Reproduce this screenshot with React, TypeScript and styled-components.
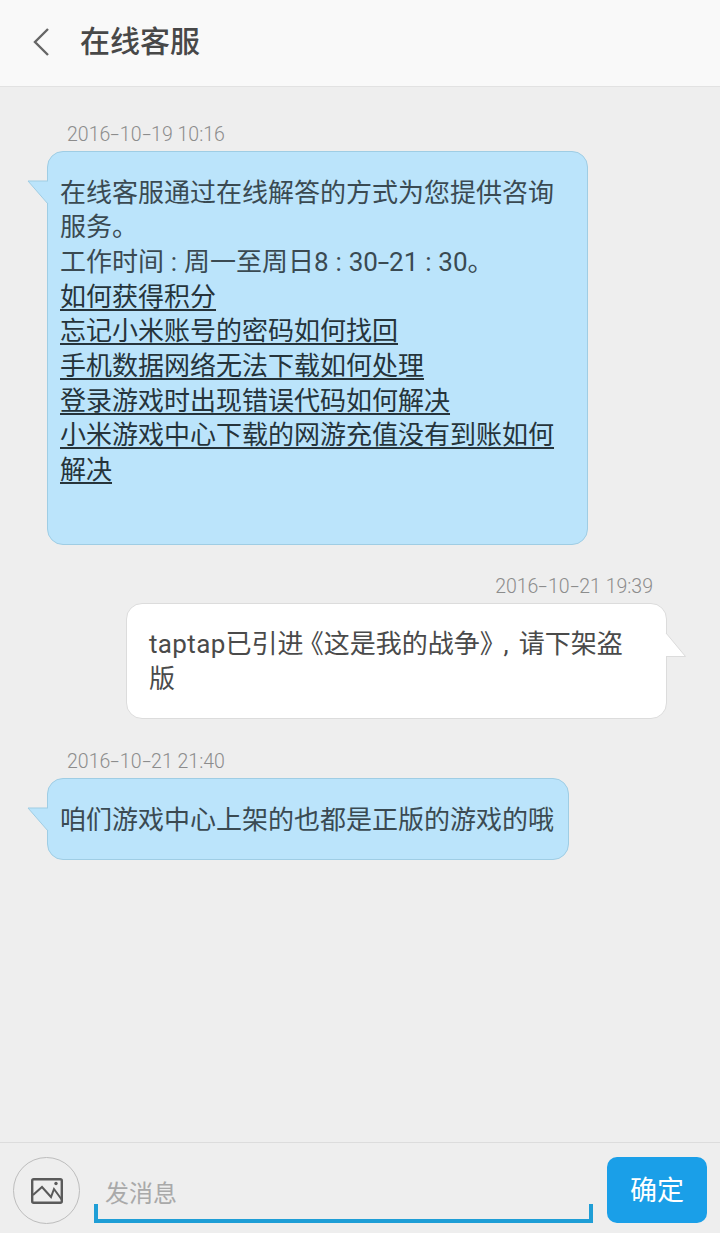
import React from "react";
import styled, { createGlobalStyle } from "styled-components";

const GlobalStyle = createGlobalStyle`
  html, body {
    margin: 0;
    padding: 0;
    background: #eeeeee;
  }
  * {
    box-sizing: border-box;
  }
`;

const Page = styled.div`
  width: 720px;
  height: 1233px;
  display: flex;
  flex-direction: column;
  background: #eeeeee;
  font-family: "Roboto", "Noto Sans CJK SC", sans-serif;
  overflow: hidden;
`;

const Header = styled.div`
  height: 87px;
  flex: none;
  display: flex;
  align-items: center;
  padding: 0 0 2px 32px;
  background: #f9f9f9;
  border-bottom: 1px solid #e2e2e2;
`;

const Title = styled.div`
  margin-left: 30px;
  font-size: 30px;
  font-weight: 500;
  color: #484848;
  line-height: 40px;
`;

const Messages = styled.div`
  flex: 1;
  display: flex;
  flex-direction: column;
  padding-top: 35px;
`;

const Message = styled.div<{ $mine?: boolean }>`
  display: flex;
  flex-direction: column;
  align-items: ${(p) => (p.$mine ? "flex-end" : "flex-start")};
  padding: ${(p) => (p.$mine ? "0 53px 0 0" : "0 0 0 47px")};
  margin-bottom: ${(p) => (p.$mine ? "30px" : "29px")};
`;

const Time = styled.div<{ $mine?: boolean }>`
  font-size: 19.5px;
  font-weight: 300;
  line-height: 26px;
  height: 29px;
  color: #8c8c8c;
  margin: ${(p) => (p.$mine ? "0 14px 0 0" : "0 0 0 20px")};
`;

const Bubble = styled.div<{ $mine?: boolean; $width: number; $height: number }>`
  position: relative;
  width: ${(p) => p.$width}px;
  height: ${(p) => p.$height}px;
  padding: ${(p) => (p.$mine ? "23px 20px 0 22px" : "23.5px 12px 0 12px")};
  background: ${(p) => (p.$mine ? "#ffffff" : "#bbe4fb")};
  border: 1px solid ${(p) => (p.$mine ? "#dcdcdc" : "#9fcde4")};
  border-radius: 16px;
  font-size: 26px;
  line-height: 34.7px;
  color: ${(p) => (p.$mine ? "#4a4a4a" : "#3a4a52")};
`;

const TailSvg = styled.svg<{ $mine?: boolean }>`
  position: absolute;
  top: 28px;
  ${(p) => (p.$mine ? "right: -21px;" : "left: -21px;")}
`;

const LinkLine = styled.div`
  text-decoration: underline;
  text-underline-offset: 3px;
  text-decoration-thickness: 2px;
  color: #26343b;
`;

const Colon = styled.span`
  display: inline-block;
  width: 20px;
  text-align: center;
`;

const Comma = styled.span`
  display: inline-block;
  width: 25px;
  text-align: center;
`;

const Latin = styled.span`
  letter-spacing: 0.35px;
`;

// half width forms of the book title marks, as the phone font draws them
const Quote = styled.span<{ $open?: boolean }>`
  font-feature-settings: "halt";
  ${(p) => (p.$open ? "margin: 0 0 0 7px;" : "margin: 0 1px 0 0;")}
`;

const Dash = styled.span`
  display: inline-block;
  margin: 0 2px;
  transform: scaleX(1.6);
`;

const Footer = styled.div`
  height: 91px;
  flex: none;
  display: flex;
  align-items: flex-start;
  padding: 14px 13px 0 13px;
  border-top: 1px solid #dcdcdc;
  background: #eeeeee;
`;

const PictureButton = styled.div`
  width: 67px;
  height: 67px;
  flex: none;
  display: flex;
  align-items: center;
  justify-content: center;
  border: 1px solid #bdbdbd;
  border-radius: 50%;
`;

const InputBox = styled.div`
  width: 499px;
  height: 66px;
  margin-left: 14px;
  position: relative;
  display: flex;
  align-items: flex-end;
  padding: 0 0 9px 11px;
  font-size: 24px;
  line-height: 32px;
  color: #a9a9a9;
  border-bottom: 4px solid #1f9ed6;
  &::before,
  &::after {
    content: "";
    position: absolute;
    bottom: 0;
    width: 4px;
    height: 15px;
    background: #1f9ed6;
  }
  &::before {
    left: 0;
  }
  &::after {
    right: 0;
  }
`;

const SubmitButton = styled.div`
  width: 100px;
  height: 66px;
  margin-left: 14px;
  padding-bottom: 4px;
  display: flex;
  align-items: center;
  justify-content: center;
  background: #1a9fe8;
  border-radius: 10px;
  color: #ffffff;
  font-size: 27px;
`;

const Tail = ({ mine }: { mine?: boolean }) =>
  mine ? (
    <TailSvg $mine width="22" height="26" viewBox="0 0 22 26">
      <path d="M0 0 L20.5 24.5 L0 24.5 Z" fill="#ffffff" />
      <path d="M1 1 L20.5 24.5 L1 24.5" fill="none" stroke="#dcdcdc" strokeWidth="1" />
    </TailSvg>
  ) : (
    <TailSvg width="22" height="26" viewBox="0 0 22 26">
      <path d="M22 1 L1 1 L22 25 Z" fill="#bbe4fb" />
      <path d="M21 1 L1 1 L21 24" fill="none" stroke="#9fcde4" strokeWidth="1" />
    </TailSvg>
  );

const Stamp = ({ date, time }: { date: string[]; time: string }) => (
  <>
    {date[0]}
    <Dash>-</Dash>
    {date[1]}
    <Dash>-</Dash>
    {date[2]} {time}
  </>
);

const links = [
  "如何获得积分",
  "忘记小米账号的密码如何找回",
  "手机数据网络无法下载如何处理",
  "登录游戏时出现错误代码如何解决",
  "小米游戏中心下载的网游充值没有到账如何解决",
];

const App = () => {
  return (
    <Page>
      <GlobalStyle />
      <Header>
        <svg width="18" height="30" viewBox="0 0 18 30">
          <path d="M16 2 L3 15 L16 28" fill="none" stroke="#666" strokeWidth="2.4" />
        </svg>
        <Title>在线客服</Title>
      </Header>
      <Messages>
        <Message>
          <Time>
            <Stamp date={["2016", "10", "19"]} time="10:16" />
          </Time>
          <Bubble $width={541} $height={394}>
            <Tail />
            在线客服通过在线解答的方式为您提供咨询
            <br />
            服务。
            <br />
            工作时间<Colon>:</Colon>周一至周日8<Colon>:</Colon>30<Dash>-</Dash>21<Colon>:</Colon>30。
            {links.map((l) => (
              <LinkLine key={l}>{l}</LinkLine>
            ))}
          </Bubble>
        </Message>
        <Message $mine>
          <Time $mine>
            <Stamp date={["2016", "10", "21"]} time="19:39" />
          </Time>
          <Bubble $mine $width={541} $height={116}>
            <Tail mine />
            <Latin>taptap</Latin>已引进<Quote $open>《</Quote>这是我的战争<Quote>》</Quote>
            <Comma>,</Comma>请下架盗
            <br />
            版
          </Bubble>
        </Message>
        <Message>
          <Time>
            <Stamp date={["2016", "10", "21"]} time="21:40" />
          </Time>
          <Bubble $width={522} $height={82}>
            <Tail />
            咱们游戏中心上架的也都是正版的游戏的哦
          </Bubble>
        </Message>
      </Messages>
      <Footer>
        <PictureButton>
          <svg width="32" height="26" viewBox="0 0 32 26">
            <rect x="1.2" y="1.2" width="29.6" height="23.6" rx="1.5" fill="none" stroke="#5a5a5a" strokeWidth="2.4" />
            <path d="M2 17 L11 9 L20 19 L23 11 L31 22" fill="none" stroke="#5a5a5a" strokeWidth="2" />
            <circle cx="25" cy="5.5" r="1.7" fill="#5a5a5a" />
          </svg>
        </PictureButton>
        <InputBox>发消息</InputBox>
        <SubmitButton>确定</SubmitButton>
      </Footer>
    </Page>
  );
};

export default App;
